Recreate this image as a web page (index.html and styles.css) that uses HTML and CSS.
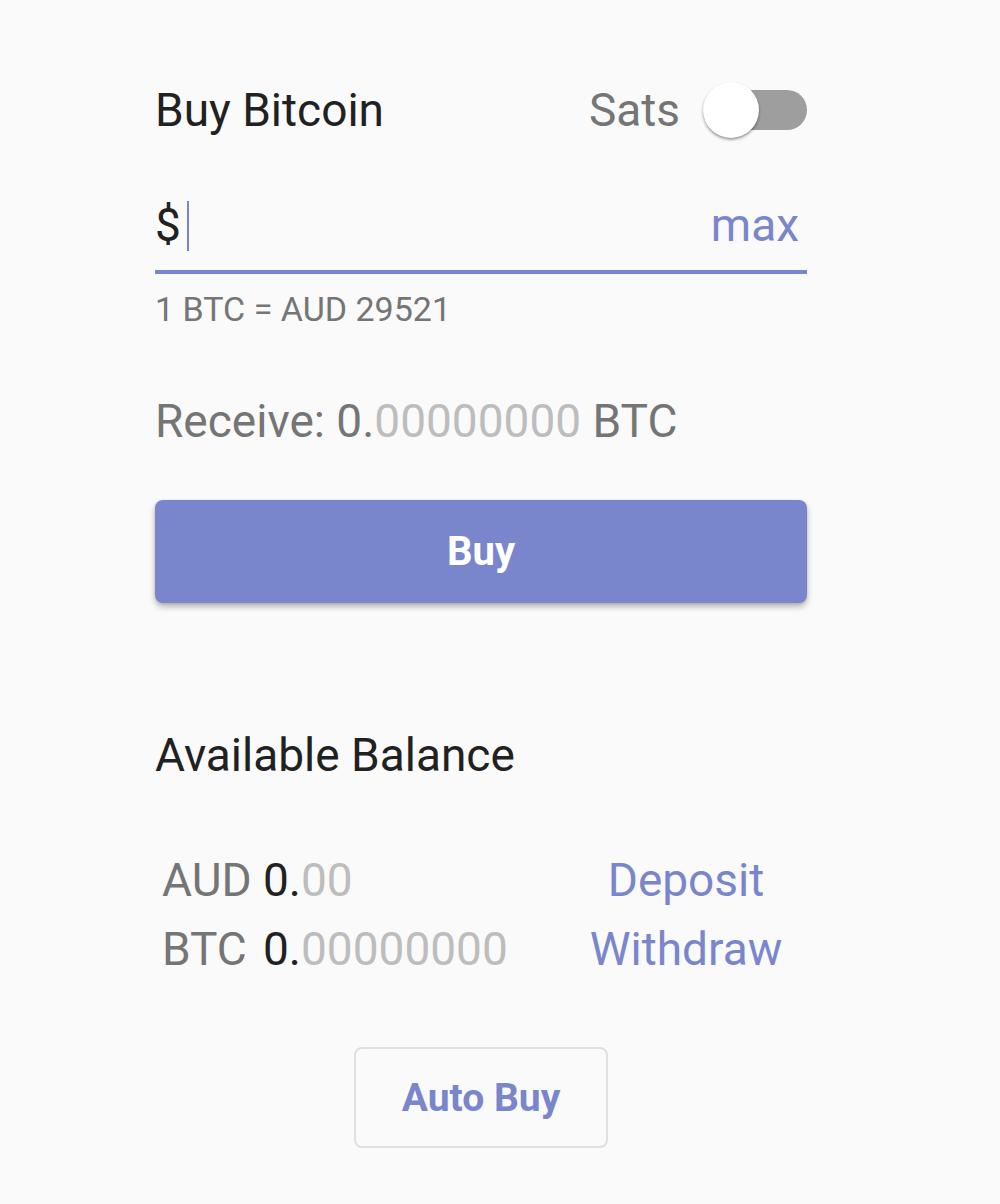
FILE: index.html
```html
<!DOCTYPE html>
<html lang="en">
<head>
<meta charset="utf-8">
<title>Buy Bitcoin</title>
<link rel="stylesheet" href="styles.css">
</head>
<body>
<main class="panel">
  <header class="head">
    <h1 class="title">Buy Bitcoin</h1>
    <div class="sats">
      <span class="sats-label">Sats</span>
      <span class="switch"><span class="track"></span><span class="thumb"></span></span>
    </div>
  </header>

  <div class="field">
    <span class="dollar">$</span><span class="caret"></span>
    <span class="spacer"></span>
    <span class="max">max</span>
  </div>
  <div class="rate">1 BTC = AUD 29521</div>

  <div class="receive">Receive: 0.<span class="dim">00000000</span> BTC</div>

  <button class="buy">Buy</button>

  <h2 class="balance-title">Available Balance</h2>

  <div class="balances">
    <div class="bal-row">
      <span class="cur">AUD</span>
      <span class="amt">0.<span class="dim">00</span></span>
      <span class="action">Deposit</span>
    </div>
    <div class="bal-row">
      <span class="cur">BTC</span>
      <span class="amt">0.<span class="dim">00000000</span></span>
      <span class="action">Withdraw</span>
    </div>
  </div>

  <div class="auto-wrap">
    <button class="auto">Auto Buy</button>
  </div>
</main>
</body>
</html>
```

FILE: styles.css
```css
html, body {
  margin: 0;
  padding: 0;
  background: #fafafa;
}

body {
  font-family: Roboto, "Liberation Sans", Arial, sans-serif;
  color: #212121;
}

.panel {
  width: 652px;
  margin-left: 155px;
  padding-top: 83px;
}

.head {
  display: flex;
  justify-content: space-between;
  align-items: center;
  height: 55px;
}

.title {
  margin: 0;
  font-size: 46px;
  font-weight: 400;
  line-height: 55px;
  color: #212121;
}

.sats {
  display: flex;
  align-items: center;
  gap: 23px;
}

.sats-label {
  font-size: 46px;
  line-height: 55px;
  color: #757575;
}

.switch {
  position: relative;
  display: block;
  width: 104px;
  height: 57px;
}

.track {
  position: absolute;
  right: 0;
  top: 8px;
  width: 96px;
  height: 40px;
  border-radius: 20px;
  background: #9e9e9e;
}

.thumb {
  position: absolute;
  left: 0;
  top: 0;
  width: 56px;
  height: 56px;
  border-radius: 50%;
  background: #ffffff;
  box-shadow: 0 2px 3px rgba(0,0,0,0.3), 0 1px 2px rgba(0,0,0,0.15);
}

.field {
  display: flex;
  align-items: center;
  margin-top: 60px;
  height: 55px;
  padding-bottom: 17px;
  border-bottom: 4px solid #7986cb;
}

.dollar {
  font-size: 46px;
  line-height: 55px;
  color: #212121;
}

.caret {
  display: block;
  width: 2px;
  height: 50px;
  margin-left: 6px;
  background: #7986cb;
}

.spacer {
  flex: 1;
}

.max {
  font-size: 46px;
  line-height: 55px;
  color: #7986cb;
  margin-right: 8px;
}

.rate {
  margin-top: 15px;
  font-size: 34px;
  line-height: 40px;
  color: #757575;
}

.receive {
  margin-top: 65px;
  font-size: 46px;
  line-height: 55px;
  color: #757575;
}

.dim {
  color: #bdbdbd;
}

.buy {
  display: block;
  width: 652px;
  height: 103px;
  margin-top: 51px;
  border: none;
  border-radius: 8px;
  background: #7986cb;
  color: #ffffff;
  font-family: Roboto, "Liberation Sans", Arial, sans-serif;
  font-size: 40px;
  font-weight: 700;
  box-shadow: 0 4px 6px rgba(0,0,0,0.25), 0 1px 3px rgba(0,0,0,0.12);
}

.balance-title {
  margin: 125px 0 0;
  font-size: 46px;
  font-weight: 400;
  line-height: 55px;
  color: #212121;
}

.balances {
  margin-top: 63px;
  padding-left: 7px;
}

.bal-row {
  display: grid;
  grid-template-columns: 101px 290px 1fr;
  align-items: baseline;
  height: 69px;
  line-height: 69px;
  font-size: 46px;
}

.cur {
  color: #757575;
}

.amt {
  color: #212121;
}

.action {
  text-align: center;
  color: #7986cb;
  padding-left: 12px;
}

.auto-wrap {
  display: flex;
  justify-content: center;
  margin-top: 63px;
}

.auto {
  width: 254px;
  height: 101px;
  border: 2px solid #e0e0e0;
  border-radius: 8px;
  background: #fafafa;
  color: #7986cb;
  font-family: Roboto, "Liberation Sans", Arial, sans-serif;
  font-size: 39px;
  font-weight: 700;
}
```
